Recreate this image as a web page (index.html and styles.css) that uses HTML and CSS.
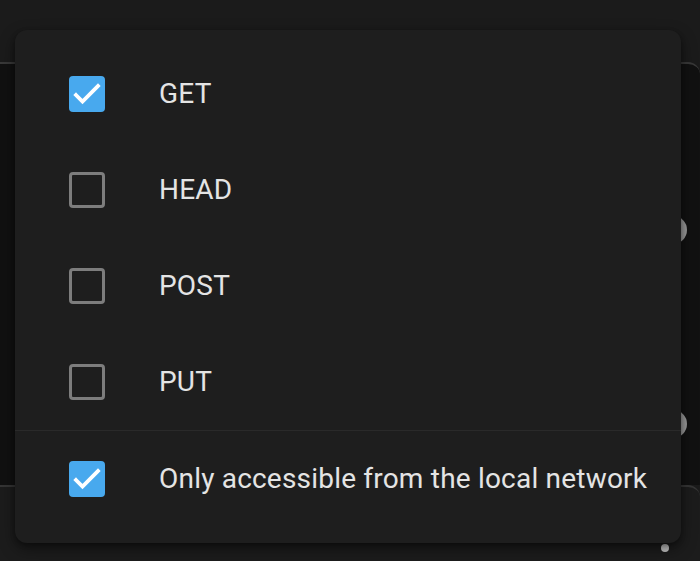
FILE: index.html
```html
<!DOCTYPE html>
<html>
<head>
<meta charset="utf-8">
<link rel="stylesheet" href="styles.css">
</head>
<body>
<div class="page">
  <div class="top-band"></div>
  <div class="card card-main">
    <span class="thumb thumb-a"></span>
    <span class="thumb thumb-b"></span>
  </div>
  <div class="card card-next">
    <span class="dot"></span>
  </div>

  <div class="menu">
    <div class="row">
      <span class="box checked"><svg viewBox="0 0 36 36"><polyline points="7,19 13.5,25.5 29,10" /></svg></span>
      <span class="label">GET</span>
    </div>
    <div class="row">
      <span class="box"></span>
      <span class="label">HEAD</span>
    </div>
    <div class="row">
      <span class="box"></span>
      <span class="label">POST</span>
    </div>
    <div class="row">
      <span class="box"></span>
      <span class="label">PUT</span>
    </div>
    <div class="divider"></div>
    <div class="row">
      <span class="box checked"><svg viewBox="0 0 36 36"><polyline points="7,19 13.5,25.5 29,10" /></svg></span>
      <span class="label">Only accessible from the local network</span>
    </div>
  </div>
</div>
</body>
</html>
```

FILE: styles.css
```css
html, body {
  margin: 0;
  padding: 0;
  background: #1b1b1b;
  width: 700px;
  height: 561px;
  overflow: hidden;
  font-family: Roboto, "Noto Sans", sans-serif;
}

.page {
  position: relative;
  width: 700px;
  height: 561px;
  display: flex;
  flex-direction: column;
}

.top-band {
  height: 62px;
  background: #1b1b1b;
}

.card {
  position: relative;
}

.card-main {
  height: 421px;
  background: #111111;
  border-top: 2px solid #393939;
  border-top-right-radius: 12px;
}

.card-next {
  flex: 1;
  background: #1c1c1c;
  border-top: 2px solid #353535;
  border-top-right-radius: 12px;
}

.thumb {
  position: absolute;
  width: 28px;
  height: 28px;
  border-radius: 50%;
  background: #9a9a9a;
  left: 659px;
}

.thumb-a { top: 152px; }
.thumb-b { top: 346px; }

.dot {
  position: absolute;
  width: 8px;
  height: 8px;
  border-radius: 50%;
  background: #c4c4c4;
  left: 661px;
  top: 57px;
}

.menu {
  position: absolute;
  left: 15px;
  top: 30px;
  width: 666px;
  box-sizing: border-box;
  padding: 16px 0;
  background: #1e1e1e;
  border-radius: 12px;
  box-shadow: 0 6px 16px rgba(0, 0, 0, 0.45), 0 2px 5px rgba(0, 0, 0, 0.3);
}

.row {
  height: 96px;
  display: flex;
  align-items: center;
  padding-left: 54px;
  gap: 54px;
}

.divider {
  height: 1px;
  background: #2a2a2a;
}

.box {
  width: 36px;
  height: 36px;
  box-sizing: border-box;
  border: 3px solid #7d7d7d;
  border-radius: 4px;
  flex: none;
  display: flex;
}

.box.checked {
  border: none;
  background: #48a9ee;
}

.box svg {
  width: 36px;
  height: 36px;
}

.box polyline {
  fill: none;
  stroke: #ffffff;
  stroke-width: 3.8;
  stroke-linecap: square;
}

.label {
  font-size: 28px;
  line-height: 32px;
  letter-spacing: 0.2px;
  color: #e4e4e4;
}
```
